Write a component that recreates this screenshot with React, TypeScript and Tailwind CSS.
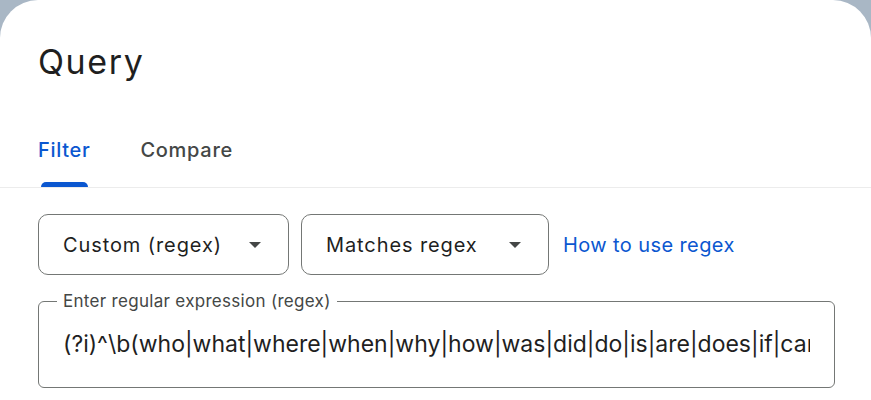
const regex =
  "(?i)^\\b(who|what|where|when|why|how|was|did|do|is|are|does|if|can|could|should|would|will)\\b";

function Select({ label, width }: { label: string; width: string }) {
  return (
    <button
      className={`flex items-center justify-between h-[61px] ${width} pl-6 pr-[27px] rounded-[10px] border border-[#747775] bg-white text-[20px] tracking-[0.9px] text-[#1f1f1f]`}
    >
      <span>{label}</span>
      <span className="w-0 h-0 border-l-[6px] border-r-[6px] border-t-[6px] border-l-transparent border-r-transparent border-t-[#444746]" />
    </button>
  );
}

export default function App() {
  return (
    <div
      className="w-[871px] h-[400px] bg-[#a9b7c5] overflow-hidden"
      style={{ fontFamily: "Inter, Roboto, 'Liberation Sans', sans-serif" }}
    >
      <div className="h-full bg-white rounded-t-[38px] pt-[40px]">
        <h1 className="px-[38px] text-[34px] leading-[44px] tracking-[1.6px] text-[#1f1f1f]">Query</h1>

        {/* Tabs */}
        <div className="mt-[54px] border-b border-[#ececec]">
          <div className="flex gap-[50px] px-[38px]">
            <div className="flex flex-col items-center">
              <span className="text-[20px] leading-[24px] tracking-[0.7px] text-[#0b57d0] font-medium">Filter</span>
              <span className="mt-[20px] h-[5px] w-[47px] rounded-t-full bg-[#0b57d0]" />
            </div>
            <span className="text-[20px] leading-[24px] tracking-[0.7px] text-[#444746] font-medium">Compare</span>
          </div>
        </div>

        {/* Filter row */}
        <div className="flex items-center gap-[12px] px-[38px] mt-[26px]">
          <Select label="Custom (regex)" width="w-[251px]" />
          <Select label="Matches regex" width="w-[248px]" />
          <a className="ml-[2px] text-[20px] tracking-[0.4px] text-[#0b57d0]">How to use regex</a>
        </div>

        {/* Regex field */}
        <div className="relative ml-[38px] mr-[36px] mt-[26px] h-[87px] rounded-[6px] border border-[#747775] flex items-center px-6">
          <span className="absolute -top-[11px] left-[18px] bg-white px-[6px] text-[17px] leading-[20px] tracking-[0.3px] text-[#444746]">
            Enter regular expression (regex)
          </span>
          <div className="overflow-hidden whitespace-nowrap text-[23px] text-[#1f1f1f]">{regex}</div>
        </div>
      </div>
    </div>
  );
}
